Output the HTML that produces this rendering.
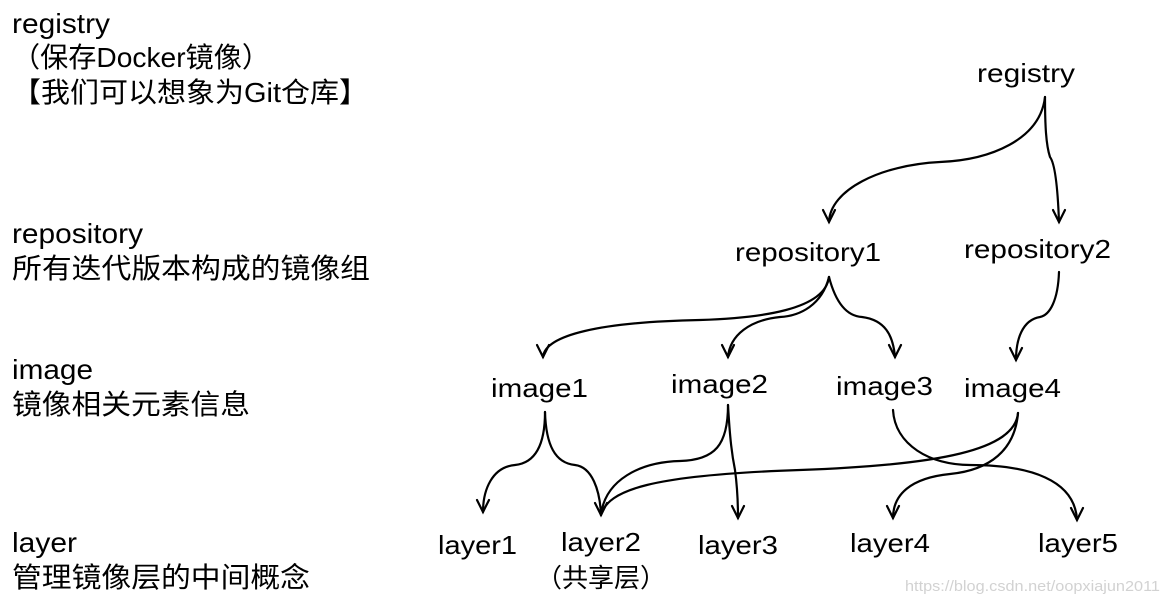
<!DOCTYPE html>
<html><head><meta charset="utf-8"><style>
html,body{margin:0;padding:0;background:#fff;}
svg{display:block}
text{font-family:"Liberation Sans","Noto Sans CJK SC",sans-serif;fill:#000;}
.c{font-family:"Liberation Sans","Noto Sans CJK SC",sans-serif;}
</style></head><body>
<svg width="1167" height="603" viewBox="0 0 1167 603" xmlns="http://www.w3.org/2000/svg">
<g font-size="28">
<text x="12" y="33" textLength="98" lengthAdjust="spacingAndGlyphs">registry</text>
<text x="12" y="67" class="c" textLength="258" lengthAdjust="spacingAndGlyphs">（保存Docker镜像）</text>
<text x="12" y="102" class="c" textLength="356" lengthAdjust="spacingAndGlyphs">【我们可以想象为Git仓库】</text>
<text x="12" y="243" textLength="131" lengthAdjust="spacingAndGlyphs">repository</text>
<text x="12" y="278" class="c" textLength="358" lengthAdjust="spacingAndGlyphs">所有迭代版本构成的镜像组</text>
<text x="12" y="379" textLength="81" lengthAdjust="spacingAndGlyphs">image</text>
<text x="12" y="414" class="c" textLength="238" lengthAdjust="spacingAndGlyphs">镜像相关元素信息</text>
<text x="12" y="552" textLength="65" lengthAdjust="spacingAndGlyphs">layer</text>
<text x="12" y="587" class="c" textLength="298" lengthAdjust="spacingAndGlyphs">管理镜像层的中间概念</text>
</g>
<g font-size="26">
<text x="977" y="82" textLength="98" lengthAdjust="spacingAndGlyphs">registry</text>
<text x="735" y="261" textLength="146" lengthAdjust="spacingAndGlyphs">repository1</text>
<text x="964" y="258" textLength="147" lengthAdjust="spacingAndGlyphs">repository2</text>
<text x="491" y="397" textLength="97" lengthAdjust="spacingAndGlyphs">image1</text>
<text x="671" y="393" textLength="97" lengthAdjust="spacingAndGlyphs">image2</text>
<text x="836" y="395" textLength="97" lengthAdjust="spacingAndGlyphs">image3</text>
<text x="964" y="397" textLength="97" lengthAdjust="spacingAndGlyphs">image4</text>
<text x="438" y="554" textLength="79" lengthAdjust="spacingAndGlyphs">layer1</text>
<text x="561" y="551" textLength="80" lengthAdjust="spacingAndGlyphs">layer2</text>
<text x="698" y="554" textLength="80" lengthAdjust="spacingAndGlyphs">layer3</text>
<text x="850" y="552" textLength="80" lengthAdjust="spacingAndGlyphs">layer4</text>
<text x="1038" y="552" textLength="80" lengthAdjust="spacingAndGlyphs">layer5</text>
<text x="536" y="587" class="c" textLength="130" lengthAdjust="spacingAndGlyphs">（共享层）</text>
</g>
<text x="905" y="591" font-size="15" style="fill:#d2d2d2" textLength="255" lengthAdjust="spacingAndGlyphs">https://blog.csdn.net/oopxiajun2011</text>

<g fill="none" stroke="#000" stroke-width="2.2" stroke-linecap="round">
<path d="M1045 97 C1040 140 990 160 940 162 C880 165 830 190 829 222"/>
<path d="M823 210 L829 222 L835 210"/>
<path d="M1045 97 C1045 125 1046 145 1050 157 C1056 165 1058 195 1059 222"/>
<path d="M1053 210 L1059 222 L1065 210"/>
<path d="M829 277 C825 310 760 318 700 320 C600 322 545 335 543 357"/>
<path d="M537 345 L543 357 L549 345"/>
<path d="M829 277 C822 305 800 316 780 317 C750 320 730 335 728 357"/>
<path d="M722 345 L728 357 L734 345"/>
<path d="M829 277 C835 300 845 316 862 317 C885 320 893 335 895 357"/>
<path d="M889 345 L895 357 L901 345"/>
<path d="M1059 272 C1058 300 1050 315 1040 317 C1022 320 1016 340 1016 360"/>
<path d="M1010 348 L1016 360 L1022 348"/>
<path d="M545 412 C545 445 535 463 515 465 C492 467 483 490 483 512"/>
<path d="M477 500 L483 512 L489 500"/>
<path d="M545 412 C546 445 555 463 575 465 C592 467 600 490 601 515"/>
<path d="M595 503 L601 515 L607 503"/>
<path d="M728 405 C728 445 715 460 680 461 C640 462 605 480 601 515"/>
<path d="M728 405 C730 440 732 455 735 470 C737 485 738 500 738 518"/>
<path d="M732 506 L738 518 L744 506"/>
<path d="M1018 413 C1015 450 940 465 800 470 C650 475 608 490 601 515"/>
<path d="M1018 413 C1015 450 990 470 950 474 C910 478 893 495 893 518"/>
<path d="M887 506 L893 518 L899 506"/>
<path d="M893 410 C895 445 930 465 970 465 C1030 465 1075 480 1077 520"/>
<path d="M1071 508 L1077 520 L1083 508"/>
</g>
</svg>
</body></html>
